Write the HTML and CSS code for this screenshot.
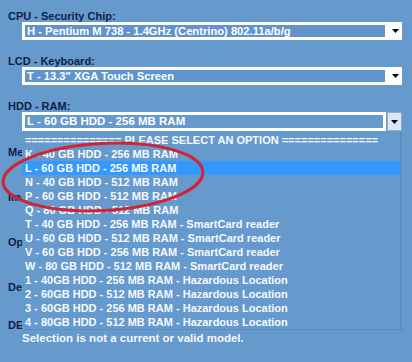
FILE: index.html
```html
<!DOCTYPE html>
<html>
<head>
<meta charset="utf-8">
<link rel="stylesheet" href="styles.css">
</head>
<body>
<form class="page">
  <div class="field">
    <div class="label">CPU - Security Chip:</div>
    <div class="select">
      <span class="value">H - Pentium M 738 - 1.4GHz (Centrino) 802.11a/b/g</span>
      <span class="arrow"><svg width="7" height="4" viewBox="0 0 7 4"><path d="M0 0H7L3.5 4Z"/></svg></span>
    </div>
  </div>
  <div class="field">
    <div class="label">LCD - Keyboard:</div>
    <div class="select">
      <span class="value">T - 13.3" XGA Touch Screen</span>
      <span class="arrow"><svg width="7" height="4" viewBox="0 0 7 4"><path d="M0 0H7L3.5 4Z"/></svg></span>
    </div>
  </div>
  <div class="field">
    <div class="label">HDD - RAM:</div>
    <div class="combo">
      <div class="select open">
        <span class="value">L - 60 GB HDD - 256 MB RAM</span>
        <span class="btn"><svg width="7" height="4" viewBox="0 0 7 4"><path d="M0 0H7L3.5 4Z"/></svg></span>
      </div>
      <ul class="listbox">
        <li>=============== PLEASE SELECT AN OPTION ===============</li>
        <li>K - 40 GB HDD - 256 MB RAM</li>
        <li class="active">L - 60 GB HDD - 256 MB RAM</li>
        <li>N - 40 GB HDD - 512 MB RAM</li>
        <li>P - 60 GB HDD - 512 MB RAM</li>
        <li>Q - 80 GB HDD - 512 MB RAM</li>
        <li>T - 40 GB HDD - 256 MB RAM - SmartCard reader</li>
        <li>U - 60 GB HDD - 512 MB RAM - SmartCard reader</li>
        <li>V - 60 GB HDD - 256 MB RAM - SmartCard reader</li>
        <li>W - 80 GB HDD - 512 MB RAM - SmartCard reader</li>
        <li>1 - 40GB HDD - 256 MB RAM - Hazardous Location</li>
        <li>2 - 60GB HDD - 512 MB RAM - Hazardous Location</li>
        <li>3 - 60GB HDD - 256 MB RAM - Hazardous Location</li>
        <li>4 - 80GB HDD - 512 MB RAM - Hazardous Location</li>
      </ul>
    </div>
  </div>
  <div class="field">
    <div class="label">Memory Options:</div>
    <div class="select"><span class="value"></span><span class="arrow"></span></div>
  </div>
  <div class="field">
    <div class="label">Imaging:</div>
    <div class="select"><span class="value"></span><span class="arrow"></span></div>
  </div>
  <div class="field">
    <div class="label">Options:</div>
    <div class="select"><span class="value"></span><span class="arrow"></span></div>
  </div>
  <div class="field">
    <div class="label">Delivery:</div>
    <div class="select"><span class="value"></span><span class="arrow"></span></div>
  </div>
  <div class="field field-last">
    <div class="label">DESCRIPTION:</div>
    <div class="message">Selection is not a current or valid model.</div>
  </div>
</form>
<svg class="annotation" width="412" height="362" viewBox="0 0 412 362">
  <ellipse cx="103" cy="177" rx="100" ry="33.5" transform="rotate(-3 103 177)"/>
</svg>
</body>
</html>
```
FILE: styles.css
```css
html, body {
  margin: 0;
  padding: 0;
  background: #6699cc;
}
body {
  width: 412px;
  height: 362px;
  overflow: hidden;
  position: relative;
  font-family: "Liberation Sans", Arial, sans-serif;
  font-size: 11px;
  font-weight: bold;
}
.page {
  margin: 0;
  padding: 10px 0 0 8px;
  display: flex;
  flex-direction: column;
  gap: 15px;
}
.field {
  display: flex;
  flex-direction: column;
}
.field-last {
  margin-top: -7px;
}
.label {
  color: #0e1f48;
  line-height: 12px;
  height: 12px;
  white-space: nowrap;
}
.select {
  margin-left: 14px;
  width: 380px;
  height: 18px;
  box-sizing: border-box;
  display: flex;
  background: #ffffff;
  padding: 3px 0 3px 3px;
}
.value {
  flex: 1;
  background: #6194cd;
  color: #ffffff;
  font-size: 11.2px;
  line-height: 12px;
  padding-left: 2px;
  white-space: nowrap;
  overflow: hidden;
}
.arrow {
  width: 17px;
  display: flex;
  align-items: center;
  justify-content: flex-end;
  padding-right: 3px;
  box-sizing: border-box;
}
.arrow svg, .btn svg {
  fill: #000000;
}
.combo {
  position: relative;
  margin-left: 14px;
  width: 380px;
}
.select.open {
  margin-left: 0;
  height: 19px;
  background: transparent;
  padding: 0;
  gap: 1px;
}
.select.open .value {
  border: 3px solid #ffffff;
  background: #6699cc;
  font-size: 11.5px;
  line-height: 13px;
  padding-left: 2px;
}
.btn {
  width: 13px;
  background: #dae6f4;
  border: 1px solid #93aecd;
  display: flex;
  align-items: center;
  justify-content: center;
}
.listbox {
  position: absolute;
  top: 19px;
  left: 0;
  width: 380px;
  box-sizing: border-box;
  margin: 0;
  padding: 2px 0 0 0;
  list-style: none;
  background: #6699cc;
  border-right: 2px solid #5d8ec2;
  border-bottom: 1px solid #5d8ec2;
  z-index: 2;
}
.listbox li {
  height: 14px;
  line-height: 14px;
  padding-left: 3px;
  color: #f6f9ff;
  white-space: nowrap;
}
.listbox li.active {
  background: #3399ff;
}
.message {
  margin-left: 14px;
  color: #f4f8ff;
  font-size: 11.5px;
  line-height: 14px;
  white-space: nowrap;
}
.annotation {
  position: absolute;
  left: 0;
  top: 0;
  pointer-events: none;
  z-index: 3;
}
.annotation ellipse {
  fill: none;
  stroke: #d2232f;
  stroke-width: 3;
}
```
